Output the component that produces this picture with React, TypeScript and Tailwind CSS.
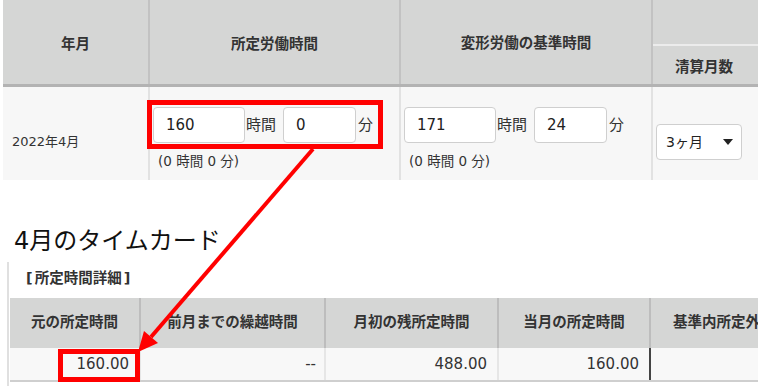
import React from 'react'

const font = "font-[family-name:'DejaVu_Sans','Noto_Sans_CJK_JP',sans-serif]"

function TimeInputs({ hours, minutes }: { hours: string; minutes: string }) {
  return (
    <div className="pl-[3px] pt-[20px]">
      <div className="flex items-center h-[36px] text-[15px] text-[#333]">
        <input readOnly value={hours}
          className="w-[92px] h-[36px] rounded-[4px] border border-[#cfcfcf] bg-white pl-[12px] text-[15px] text-[#222] outline-none" />
        <span className="ml-[1px] w-[37px]">時間</span>
        <input readOnly value={minutes}
          className="w-[73px] h-[36px] rounded-[4px] border border-[#cfcfcf] bg-white pl-[12px] text-[15px] text-[#222] outline-none" />
        <span className="ml-[2px]">分</span>
      </div>
      <div className="pl-[5px] mt-[9px] text-[13.5px] leading-[18px] text-[#333]">(0 時間 0 分)</div>
    </div>
  )
}

export default function App() {
  const th = 'flex items-center justify-center font-bold text-[14.5px] text-[#333]'
  return (
    <div className={`relative w-[758px] h-[386px] overflow-hidden bg-white ${font}`}>
      {/* 上の設定テーブル */}
      <div className="ml-[3px] w-[900px]">
        <div className="flex h-[87px] bg-[#d5d6d5] border-b-[3px] border-[#b3b3b3]">
          <div className={`${th} w-[147px] border-r-2 border-[#c2c2c2] pt-[6px]`}>年月</div>
          <div className={`${th} w-[251px] border-r-2 border-[#c2c2c2] pt-[6px]`}>所定労働時間</div>
          <div className={`${th} w-[252px] border-r-2 border-[#c2c2c2] pt-[4px]`}>変形労働の基準時間</div>
          <div className="w-[240px] flex flex-col">
            <div className="h-[46px] border-b-2 border-[#ececec]" />
            <div className="flex-1 flex items-center pl-[22px] pt-[6px] font-bold text-[14.5px] text-[#333]">清算月数</div>
          </div>
        </div>
        <div className="flex h-[93px] bg-[#f7f7f7]">
          <div className="w-[147px] border-r-2 border-[#e2e2e2] pl-[9px] pt-[45px] text-[13px] leading-[20px] text-[#333]">2022年4月</div>
          <div className="w-[251px] border-r-2 border-[#e2e2e2]">
            <TimeInputs hours="160" minutes="0" />
          </div>
          <div className="w-[252px] border-r-2 border-[#e2e2e2]">
            <TimeInputs hours="171" minutes="24" />
          </div>
          <div className="w-[240px] pl-[3px] pt-[37px]">
            <div className="w-[86px] h-[36px] rounded-[4px] border border-[#cfcfcf] bg-white flex items-center justify-between pl-[9px] pr-[8px] text-[14px] text-[#222]">
              <span>3ヶ月</span>
              <svg width="10" height="6" viewBox="0 0 10 6"><path d="M0 0h10L5 6z" fill="#222" /></svg>
            </div>
          </div>
        </div>
      </div>

      <h2 className="mt-[46px] ml-[14px] text-[24px] leading-[30px] font-normal text-[#111]">4月のタイムカード</h2>

      {/* 所定時間詳細 */}
      <div className="mt-[6px] ml-[7px] border-l-2 border-[#e0e0e0] pl-[1px] h-[200px]">
        <div className="pl-[16px] pt-[6px] h-[36px] text-[14.5px] leading-[20px] font-bold text-[#333]">
          <span className="mr-[2px]">[</span>所定時間詳細<span className="ml-[2px]">]</span>
        </div>
        <div className="w-[900px]">
          <div className="flex h-[50px] bg-[#d5d6d5] font-bold text-[14.5px] text-[#333]">
            <div className="w-[131px] border-r-2 border-[#bdbdbd] flex items-center justify-center">元の所定時間</div>
            <div className="w-[185px] border-r-2 border-[#bdbdbd] flex items-center justify-center">前月までの繰越時間</div>
            <div className="w-[173px] border-r-2 border-[#bdbdbd] flex items-center justify-center">月初の残所定時間</div>
            <div className="w-[152px] border-r-2 border-[#bdbdbd] flex items-center justify-center">当月の所定時間</div>
            <div className="w-[160px] flex items-center justify-center">基準内所定外時間</div>
          </div>
          <div className="flex h-[34px] bg-[#f8f8f8] border-b-2 border-[#cfcfcf] text-[15px] text-[#333]">
            <div className="w-[131px] border-r-2 border-[#e6e6e6] flex items-center justify-end pr-[10px]">160.00</div>
            <div className="w-[185px] border-r-2 border-[#e6e6e6] flex items-center justify-end pr-[8px]">--</div>
            <div className="w-[173px] border-r-2 border-[#e6e6e6] flex items-center justify-end pr-[10px]">488.00</div>
            <div className="w-[152px] border-r-2 border-[#444] flex items-center justify-end pr-[10px]">160.00</div>
            <div className="w-[160px]" />
          </div>
        </div>
      </div>

      {/* 注釈: 赤枠と矢印 */}
      <div className="absolute left-[147px] top-[100px] w-[236px] h-[49px] border-[5px] border-[#ff0000]" />
      <div className="absolute left-[58px] top-[349px] w-[82px] h-[33px] border-[5px] border-[#ff0000]" />
      <svg className="absolute left-0 top-0 pointer-events-none" width="758" height="386">
        <line x1="313" y1="149" x2="151" y2="337" stroke="#ff0000" strokeWidth="4" />
        <polygon points="138,352 158,343 144,331" fill="#ff0000" />
      </svg>
    </div>
  )
}
